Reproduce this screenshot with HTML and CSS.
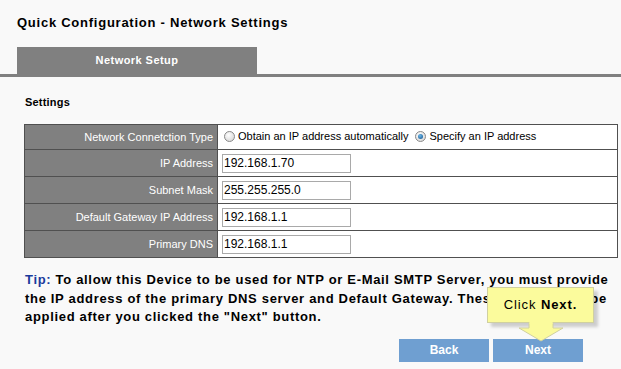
FILE: index.html
```html
<!DOCTYPE html>
<html lang="en">
<head>
    <meta charset="UTF-8">
    <title>Quick Configuration - Network Settings</title>
    <link rel="stylesheet" href="styles.css">
</head>
<body>
    <div class="page">
        <h1 class="page-title">Quick Configuration - Network Settings</h1>

        <div class="tab-bar">
            <div class="tab">Network Setup</div>
        </div>

        <div class="content">
            <h2 class="section-title">Settings</h2>

            <table class="settings">
                <tr class="first-row">
                    <th>Network Connetction Type</th>
                    <td>
                        <label class="radio"><span class="radio-dot"></span>Obtain an IP address automatically</label>
                        <label class="radio"><span class="radio-dot checked"></span>Specify an IP address</label>
                    </td>
                </tr>
                <tr>
                    <th>IP Address</th>
                    <td><input type="text" value="192.168.1.70"></td>
                </tr>
                <tr>
                    <th>Subnet Mask</th>
                    <td><input type="text" value="255.255.255.0"></td>
                </tr>
                <tr>
                    <th>Default Gateway IP Address</th>
                    <td><input type="text" value="192.168.1.1"></td>
                </tr>
                <tr>
                    <th>Primary DNS</th>
                    <td><input type="text" value="192.168.1.1"></td>
                </tr>
            </table>

            <p class="tip"><span class="tip-label">Tip:</span> To allow this Device to be used for NTP or E-Mail SMTP Server, you must provide the IP address of the primary DNS server and Default Gateway. These settings will be applied after you clicked the "Next" button.</p>

            <div class="button-row">
                <button class="btn">Back</button>
                <button class="btn">Next</button>
                <div class="callout">
                    <div class="callout-box">Click <b>Next.</b></div>
                    <svg class="callout-arrow" width="50" height="20" viewBox="0 0 50 20">
                        <path d="M12 0 H36 V6 H46 L24 19 L2 6 H12 Z" fill="#fbfb9c" stroke="#d0d0a0" stroke-width="1"/>
                        <rect x="12.5" y="0" width="23" height="2" fill="#fbfb9c"/>
                    </svg>
                </div>
            </div>
        </div>
    </div>
</body>
</html>
```

FILE: styles.css
```css
body {
    margin: 0;
    padding: 0;
    background-color: #f9f9f9;
    font-family: "Liberation Sans", Arial, sans-serif;
    color: #000;
}
.page {
    padding-top: 14px;
}
.page-title {
    margin: 0 0 0 17px;
    font-size: 13px;
    font-weight: bold;
    line-height: 18px;
    letter-spacing: 0.75px;
}
.tab-bar {
    margin-top: 15px;
    padding-left: 17px;
    border-bottom: 3px solid #808080;
    display: flex;
}
.tab {
    width: 240px;
    height: 27px;
    line-height: 27px;
    background-color: #808080;
    color: #fff;
    font-size: 11px;
    font-weight: bold;
    text-align: center;
    letter-spacing: 0.45px;
}
.content {
    padding: 0 4px 0 24px;
}
.section-title {
    margin: 0;
    padding: 18px 0 0 1px;
    font-size: 11px;
    font-weight: bold;
    line-height: 14px;
    height: 47px;
    box-sizing: border-box;
    letter-spacing: 0.2px;
}
.settings {
    width: 594px;
    border-collapse: collapse;
    font-size: 11px;
}
.settings tr {
    height: 27px;
}
.settings tr.first-row {
    height: 25px;
}
.settings th,
.settings td {
    border: 1px solid #505050;
    padding: 0;
}
.settings th {
    width: 188px;
    background-color: #808080;
    color: #fff;
    font-weight: normal;
    text-align: right;
    padding-right: 4px;
}
.settings td {
    background-color: #fff;
    padding-left: 4px;
}
.settings input[type="text"] {
    width: 129px;
    height: 19px;
    box-sizing: border-box;
    margin: 0;
    padding: 0 1px;
    border: 1px solid #a9a9a9;
    font-family: "Liberation Sans", Arial, sans-serif;
    font-size: 12px;
    color: #000;
    background: #fff;
    display: block;
}
.radio {
    display: inline-flex;
    align-items: center;
    margin-right: 2px;
}
.radio-dot {
    width: 11px;
    height: 11px;
    border-radius: 50%;
    border: 1px solid #8a8a8a;
    background: radial-gradient(circle at 40% 35%, #ffffff, #cfcfcf);
    margin: 0 3px 0 2px;
    box-sizing: border-box;
    position: relative;
}
.radio-dot.checked::after {
    content: "";
    position: absolute;
    left: 2px;
    top: 2px;
    width: 5px;
    height: 5px;
    border-radius: 50%;
    background: radial-gradient(circle at 40% 35%, #6fb8e8, #0b4f8a);
}
.tip {
    margin: 13px -4px 0 1px;
    font-size: 13px;
    font-weight: bold;
    line-height: 18.5px;
    letter-spacing: 0.68px;
    color: #000;
}
.tip-label {
    color: #1a3a9c;
}
.button-row {
    position: relative;
    display: flex;
    gap: 4px;
    padding-left: 375px;
    margin-top: 12px;
}
.btn {
    width: 90px;
    height: 23px;
    border: none;
    background-color: #6f9fd1;
    color: #fff;
    font-family: "Liberation Sans", Arial, sans-serif;
    font-size: 12px;
    font-weight: bold;
    padding: 0;
}
.callout {
    position: absolute;
    left: 463px;
    top: -52px;
}
.callout-box {
    width: 105px;
    height: 34px;
    line-height: 34px;
    background-color: #fbfb9c;
    border: 1px solid #d0d0a0;
    font-size: 13px;
    text-align: center;
    box-shadow: 4px 4px 3px rgba(0, 0, 0, 0.18);
    letter-spacing: 0.9px;
}
.callout-arrow {
    display: block;
    margin: -1px 0 0 30px;
}
```
